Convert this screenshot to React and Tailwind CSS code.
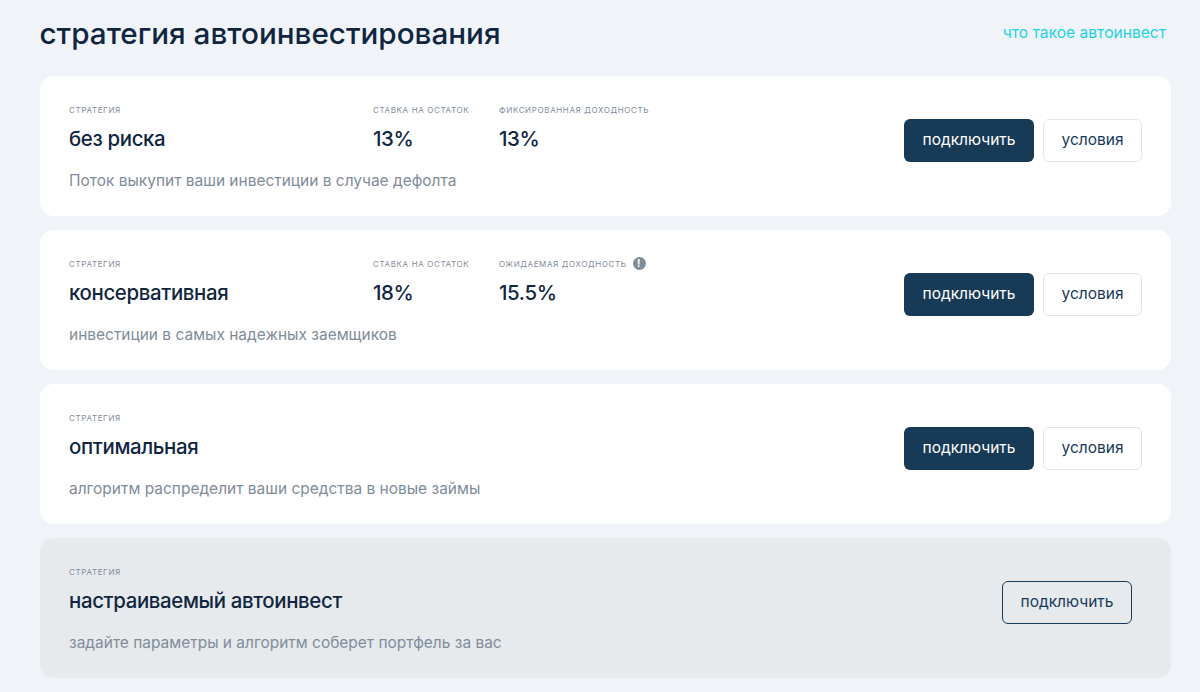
import React from 'react'

const font = 'font-["Inter","Noto_Sans",sans-serif]'

const Stat = ({ label, value, hint, className }) => (
    <div className={className}>
        <div className="flex items-center h-[14px] text-[8px] leading-[14px] tracking-[0.63px] uppercase text-[#7f8c9a] whitespace-nowrap">
            {label}
            {hint && (
                <span className="ml-[6px] w-[13px] h-[13px] rounded-full bg-[#7f8c9a] text-white text-[10px] font-bold leading-[13px] text-center">!</span>
            )}
        </div>
        <div className="mt-[9px] h-[26px] text-[20.4px] leading-[26px] font-medium tracking-[-0.35px] text-[#10263f] whitespace-nowrap">{value}</div>
    </div>
)

const Card = ({ title, desc, stats, muted }) => (
    <div className={`flex items-center justify-between h-[140px] rounded-[14px] pl-[29.5px] ${muted ? 'bg-[#e7eaed] pr-[39px]' : 'bg-white pr-[29px]'}`}>
        <div className="pt-[1px]">
            <div className="flex">
                <Stat label="стратегия" value={title} className="w-[304px]" />
                {stats && stats.map((s, i) => (
                    <Stat key={s.label} {...s} className={i === 0 ? 'w-[126px]' : ''} />
                ))}
            </div>
            <p className="mt-[19px] text-[15.48px] leading-[20px] text-[#7f8c9a]">{desc}</p>
        </div>
        {muted ? (
            <button className="mb-[12px] w-[130px] h-[43px] rounded-[6px] border border-[#17395a] text-[15.5px] text-[#17395a]">подключить</button>
        ) : (
            <div className="mb-[12px] flex gap-[9px]">
                <button className="w-[130px] h-[43px] rounded-[6px] bg-[#173a56] text-[15.5px] text-white">подключить</button>
                <button className="w-[99px] h-[43px] rounded-[6px] border border-[#e3e5e8] bg-white text-[15.5px] text-[#17395a]">условия</button>
            </div>
        )}
    </div>
)

export default function App() {
    return (
        <div className={`${font} w-[1200px] h-[692px] overflow-hidden bg-[#f0f4f9] pl-[39.5px] pr-[29px] pt-[14px]`}>
            <div className="flex items-center justify-between h-[38px] pr-[5px]">
                <h1 className="text-[29.65px] leading-[38px] font-medium text-[#10263f]">стратегия автоинвестирования</h1>
                <a className="text-[15.6px] text-[#1fd3e0]">что такое автоинвест</a>
            </div>
            <div className="mt-[24px] flex flex-col gap-[14px]">
                <Card
                    title="без риска"
                    desc="Поток выкупит ваши инвестиции в случае дефолта"
                    stats={[
                        { label: 'ставка на остаток', value: '13%' },
                        { label: 'фиксированная доходность', value: '13%' },
                    ]}
                />
                <Card
                    title="консервативная"
                    desc="инвестиции в самых надежных заемщиков"
                    stats={[
                        { label: 'ставка на остаток', value: '18%' },
                        { label: 'ожидаемая доходность', value: '15.5%', hint: true },
                    ]}
                />
                <Card title="оптимальная" desc="алгоритм распределит ваши средства в новые займы" />
                <Card title="настраиваемый автоинвест" desc="задайте параметры и алгоритм соберет портфель за вас" muted />
            </div>
        </div>
    )
}
